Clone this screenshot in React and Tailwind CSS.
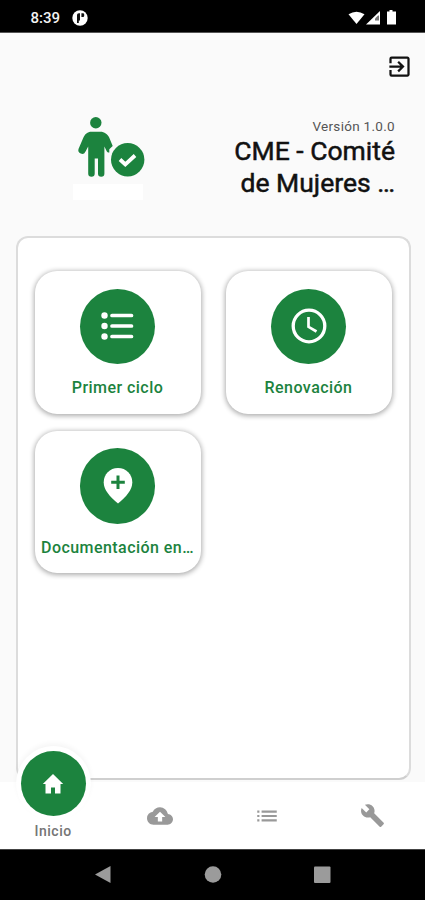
import React from "react";
import { MdExitToApp, MdBackup, MdList, MdBuild } from "react-icons/md";

const font = "font-['Roboto','Liberation_Sans',sans-serif]";

function StatusBar() {
  return (
    <div className="flex h-[33px] shrink-0 items-center justify-between border-b border-[#555] bg-black pl-[30.5px] pr-[28px] pt-[4px] text-[#f2f2f2]">
      <div className="flex items-center gap-[12px]">
        <span className="text-[15px] font-medium leading-none">8:39</span>
        <svg className="size-[16px]" viewBox="0 0 16 16">
          <circle cx="8" cy="8" r="7.700" fill="#fff" />
          <path d="M5 13V5a1.800 1.800 0 0 1 1.800-1.800H8V10.500H6.800V13zM9.400 3.200h1.600a1.200 1.200 0 0 1 1.200 1.200v1.400A1.200 1.200 0 0 1 11 7H9.400z" fill="#111" />
        </svg>
      </div>
      <svg className="h-[16px] w-[50px]" viewBox="0 0 50 16" fill="#fff">
        <path d="M1.500 4.300Q9.500-1 17.500 4.300L9.500 14z" />
        <path d="M33 1V14.500H19z" />
        <path d="M28 8.500l3-3h1v5h-4z" fill="#777" />
        <path d="M42.500 0h3v1.500H49V14.500H40V1.500h2.500z" />
      </svg>
    </div>
  );
}

function Logo() {
  return (
    <svg className="h-[84px] w-[80px]" viewBox="72 116 80 84">
      <rect x="73" y="184" width="70" height="16" fill="#fff" />
      <g fill="#1c833e">
        <circle cx="95.800" cy="122.700" r="5.700" />
        <path d="M91.500 131.800h8.800c4.200 0 7.300 2.400 8.900 5.800l3.500 8.400-3.400 3.200v3.400c-1.400 0-2.200-.6-2.700-1.600l-2.200-4.500V173.500a3.100 3.100 0 0 1-6.400 0v-15h-3.300v15a3.250 3.250 0 0 1-6.500 0v-27l-2.800 5.200a3.700 3.700 0 0 1-6.900-2.600l4.700-11c1.600-3.900 4.300-6.300 8.300-6.300z" />
        <circle cx="127.700" cy="159.700" r="16.700" />
      </g>
      <path d="M120 159.500l5.300 5 9.700-9" fill="none" stroke="#fff" strokeWidth="3.800" />
    </svg>
  );
}

function ListIcon() {
  return (
    <svg className="size-[40px]" viewBox="0 0 40 40" fill="#fff" stroke="#fff">
      <path d="M14 9.500H33.500M14 20H33.500M14 30.500H33.500" strokeWidth="3.700" strokeLinecap="round" />
      <circle cx="6.500" cy="9.500" r="3.200" stroke="none" />
      <circle cx="6.500" cy="20" r="3.200" stroke="none" />
      <circle cx="6.500" cy="30.500" r="3.200" stroke="none" />
    </svg>
  );
}

function ClockIcon() {
  return (
    <svg className="size-[40px]" viewBox="0 0 40 40" fill="none" stroke="#fff">
      <circle cx="20" cy="20" r="15.800" strokeWidth="3.300" />
      <path d="M19.500 11v9.800l8 4.700" strokeWidth="2.700" />
    </svg>
  );
}

function PinIcon() {
  return (
    <svg className="size-[40px]" viewBox="0 0 40 40">
      <path d="M20 2c-8.200 0-14.300 6.300-14.300 14.200 0 8.300 6.300 14.200 14.300 21.300 8-7.100 14.300-13 14.300-21.300C34.300 8.300 28.200 2 20 2z" fill="#fff" />
      <path d="M20 9.400v13.600M13.200 16.200h13.600" stroke="#1c833e" strokeWidth="3" />
    </svg>
  );
}

function Tile({ icon, label }) {
  return (
    <div className="flex h-[142.5px] w-[166px] flex-col items-center rounded-[22px] bg-white pt-[17.5px] shadow-[0_1px_5px_1px_rgba(0,0,0,0.32)]">
      <div className="flex size-[75.5px] items-center justify-center rounded-full bg-[#1c833e]">{icon}</div>
      <div className="mt-[13px] whitespace-nowrap text-[16px] font-medium leading-[22px] tracking-[0.45px] text-[#1c833e]">{label}</div>
    </div>
  );
}

function TabBar() {
  return (
    <div className="relative z-10 grid h-[67px] shrink-0 grid-cols-4 bg-white text-[#999]">
      <div className="flex flex-col items-center">
        <div className="-mt-[36px] flex size-[75px] shrink-0 items-center justify-center rounded-full bg-white shadow-[0_-3px_5px_rgba(0,0,0,0.04)]">
          <div className="flex size-[65px] items-center justify-center rounded-full bg-[#1c833e]">
            <svg className="size-[22px]" viewBox="0 0 22 22" fill="#fff">
              <path d="M11 1L.800 11H3.500v9.500H9V14.500h4v6h5.500V11h2.700z" />
            </svg>
          </div>
        </div>
        <div className="mt-[1px] text-[14px] font-medium leading-[18px] tracking-[0.5px] text-[#757575]">Inicio</div>
      </div>
      <div className="flex items-center justify-center pl-[2px]"><MdBackup className="size-[26px]" /></div>
      <div className="flex items-center justify-center pl-[2px]"><MdList className="size-[26px]" /></div>
      <div className="flex items-center justify-center pl-[2px]"><MdBuild className="size-[25px]" /></div>
    </div>
  );
}

function SystemNav() {
  return (
    <div className="flex h-[51px] shrink-0 items-center justify-center border-t border-[#444] bg-black">
      <svg className="h-[20px] w-[236px]" viewBox="95 864 236 20" fill="#9b9b9b">
        <path d="M95 873.500l15.500-8.500v17z" />
        <circle cx="213" cy="873.500" r="8.300" />
        <rect x="314" y="865.500" width="16.500" height="16.500" rx="1" />
      </svg>
    </div>
  );
}

export default function App() {
  return (
    <div className={`flex h-[900px] w-[425px] flex-col overflow-hidden bg-[#fafafa] ${font}`}>
      <StatusBar />
      <header className="flex h-[203px] shrink-0 flex-col">
        <div className="flex justify-end pr-[12px] pt-[20px]">
          <MdExitToApp className="size-[27px] text-[#111]" />
        </div>
        <div className="flex justify-between pl-[72px] pr-[30px] pt-[36px]">
          <Logo />
          <div className="flex flex-col items-end pt-[1px] text-right">
            <div className="text-[13.500px] leading-[18px] tracking-[0.3px] text-[#555]">Versión 1.0.0</div>
            <div className="whitespace-nowrap text-[26.500px] leading-[32px] text-[#111] [-webkit-text-stroke:0.5px_#111]">
              CME - Comité<br />de Mujeres …
            </div>
          </div>
        </div>
      </header>
      <main className="mb-[2px] ml-[15.5px] mr-[14px] min-h-0 flex-1 rounded-[12px] border-2 border-[#dcdcdc] border-b-[#cfcfcf] bg-white">
        <div className="grid grid-cols-[166px_166px] gap-x-[25px] gap-y-[17px] pl-[17px] pt-[33px]">
          <Tile icon={<ListIcon />} label="Primer ciclo" />
          <Tile icon={<ClockIcon />} label="Renovación" />
          <Tile icon={<PinIcon />} label="Documentación en…" />
        </div>
      </main>
      <TabBar />
      <SystemNav />
    </div>
  );
}
